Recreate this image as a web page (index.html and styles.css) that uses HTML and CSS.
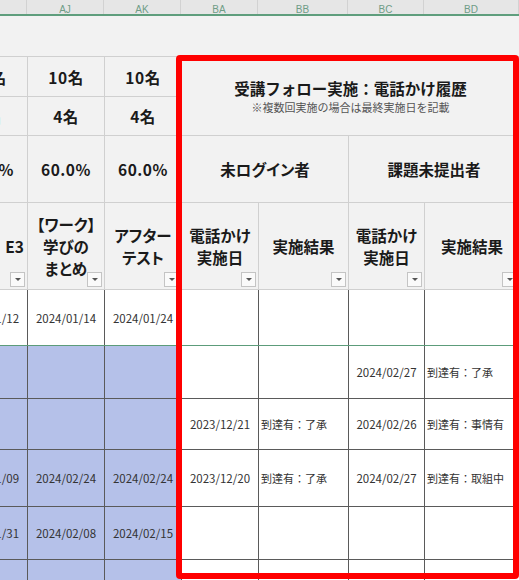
FILE: index.html
```html
<!DOCTYPE html>
<html lang="ja">
<head>
<meta charset="utf-8">
<title>受講フォロー実施</title>
<link rel="stylesheet" href="styles.css">
</head>
<body>
<div class="sheet">
  <div class="colbar">
    <div class="ch c-l"></div>
    <div class="ch c-aj">AJ</div>
    <div class="ch c-ak">AK</div>
    <div class="ch c-ba">BA</div>
    <div class="ch c-bb">BB</div>
    <div class="ch c-bc">BC</div>
    <div class="ch c-bd">BD</div>
  </div>
  <table class="grid">
    <colgroup>
      <col class="c-l"><col class="c-aj"><col class="c-ak"><col class="c-ba"><col class="c-bb"><col class="c-bc"><col class="c-bd">
    </colgroup>
    <tr class="blank"><td colspan="7"></td></tr>
    <tr class="hd r-a">
      <td class="num">10名</td><td class="num">10名</td><td class="num">10名</td>
      <td class="title" colspan="4" rowspan="2">
        <div class="title-main">受講フォロー実施：電話かけ履歴</div>
        <div class="title-note">※複数回実施の場合は最終実施日を記載</div>
      </td>
    </tr>
    <tr class="hd r-b">
      <td class="num">4名</td><td class="num">4名</td><td class="num">4名</td>
    </tr>
    <tr class="hd r-c">
      <td class="num">60.0%</td><td class="num">60.0%</td><td class="num">60.0%</td>
      <td class="group" colspan="2">未ログイン者</td>
      <td class="group" colspan="2">課題未提出者</td>
    </tr>
    <tr class="hd r-d">
      <td class="lab lab-right">E3<span class="dd"></span></td>
      <td class="lab">【ワーク】<br>学びの<br>まとめ<span class="dd"></span></td>
      <td class="lab">アフター<br>テスト<span class="dd"></span></td>
      <td class="lab">電話かけ<br>実施日<span class="dd"></span></td>
      <td class="lab">実施結果<span class="dd"></span></td>
      <td class="lab">電話かけ<br>実施日<span class="dd"></span></td>
      <td class="lab">実施結果<span class="dd"></span></td>
    </tr>
    <tr class="dt d1 first">
      <td class="date">2024/01/12</td><td class="date">2024/01/14</td><td class="date">2024/01/24</td>
      <td></td><td></td><td></td><td></td>
    </tr>
    <tr class="dt d2">
      <td class="blue"></td><td class="blue"></td><td class="blue"></td>
      <td></td><td></td><td class="date">2024/02/27</td><td class="res">到達有：了承</td>
    </tr>
    <tr class="dt d3">
      <td class="blue"></td><td class="blue"></td><td class="blue"></td>
      <td class="date">2023/12/21</td><td class="res">到達有：了承</td><td class="date">2024/02/26</td><td class="res">到達有：事情有</td>
    </tr>
    <tr class="dt d4">
      <td class="blue date">2024/01/09</td><td class="blue date">2024/02/24</td><td class="blue date">2024/02/24</td>
      <td class="date">2023/12/20</td><td class="res">到達有：了承</td><td class="date">2024/02/27</td><td class="res">到達有：取組中</td>
    </tr>
    <tr class="dt d5">
      <td class="blue date">2024/01/31</td><td class="blue date">2024/02/08</td><td class="blue date">2024/02/15</td>
      <td></td><td></td><td></td><td></td>
    </tr>
    <tr class="dt d6">
      <td class="blue"></td><td class="blue"></td><td class="blue"></td>
      <td></td><td></td><td></td><td></td>
    </tr>
  </table>
  <div class="sel"></div>
</div>
</body>
</html>
```
FILE: styles.css
```css
html, body {
  margin: 0;
  padding: 0;
}
body {
  width: 519px;
  height: 580px;
  overflow: hidden;
  background: #ffffff;
  font-family: "Noto Sans CJK JP", "Noto Sans", sans-serif;
  color: #1a1a1a;
}
.sheet {
  position: relative;
  margin-left: -50px;
  width: 569px;
}
.c-l { width: 77px; }
.c-aj { width: 77px; }
.c-ak { width: 77px; }
.c-ba { width: 77px; }
.c-bb { width: 90px; }
.c-bc { width: 76px; }
.c-bd { width: 95px; }

.colbar {
  display: flex;
  height: 14px;
  background: #e6e6e6;
  border-bottom: 2px solid #5f9e7d;
}
.ch {
  box-sizing: border-box;
  flex: none;
  height: 14px;
  overflow: hidden;
  border-right: 1px solid #d2d2d2;
  font-family: "Liberation Sans", sans-serif;
  font-size: 10px;
  line-height: 20px;
  color: #6f9d86;
  text-align: center;
}

.grid {
  border-collapse: collapse;
  table-layout: fixed;
  width: 569px;
}
.grid td {
  padding: 0;
  vertical-align: middle;
  text-align: center;
}
.blank td {
  height: 40px;
  background: #f2f2f2;
  border: none;
  border-bottom: 1px solid #d0d0d0;
}
.hd td {
  background: #f2f2f2;
  border: 1px solid #d0d0d0;
  font-weight: bold;
  font-size: 15.5px;
  color: #1a1a1a;
}
.r-a td { height: 39px; }
.r-b td { height: 38px; }
.r-c td { height: 66px; }
.r-d td { height: 86px; }
.num {
  letter-spacing: 0.5px;
}
.title-main {
  font-size: 15.5px;
  line-height: 20px;
}
.title-note {
  margin-top: 2px;
  font-size: 11px;
  font-weight: normal;
  color: #555555;
  line-height: 15px;
}
.group {
  font-feature-settings: "palt";
}
.lab {
  position: relative;
  line-height: 22px;
  font-feature-settings: "palt";
}
.lab-right {
  text-align: right !important;
  padding-right: 3px !important;
  white-space: nowrap;
  overflow: hidden;
}
.dd {
  position: absolute;
  right: 2px;
  bottom: 2px;
  width: 15px;
  height: 15px;
  box-sizing: border-box;
  background: #fafafa;
  border: 1px solid #c4c4c4;
}
.dd::after {
  content: "";
  position: absolute;
  left: 4px;
  top: 5px;
  border-left: 3px solid transparent;
  border-right: 3px solid transparent;
  border-top: 3px solid #555555;
}

.dt td {
  border: 1px solid #5a5a5a;
  background: #ffffff;
  font-size: 11.5px;
  color: #333333;
}
.dt td.blue {
  background: #b5c1e9;
}
.first td {
  border-bottom: 1px solid #5c9c7a;
}
.d1 td { height: 55px; }
.d2 td { height: 52px; }
.d3 td { height: 50px; }
.d4 td { height: 56px; }
.d5 td { height: 52px; }
.d6 td { height: 40px; }
.dt td.res {
  text-align: left;
  padding-left: 2px;
  font-size: 11px;
}

.sel {
  position: absolute;
  left: 226px;
  top: 55px;
  width: 343px;
  height: 524px;
  box-sizing: border-box;
  border: 6px solid #ff0000;
  border-radius: 4px;
}
```
